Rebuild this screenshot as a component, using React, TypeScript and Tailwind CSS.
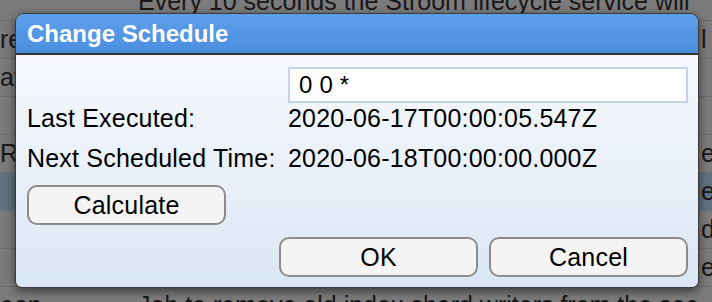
import React from "react";

type Row = { l?: string; d?: string; r?: string; hl?: boolean };

const rows: Row[] = [
  { d: "Every 10 seconds the Stroom lifecycle service will" },
  { l: "re", r: "l" },
  { l: "at" },
  {},
  { l: "Re", r: "e" },
  { r: "e", hl: true },
  { r: "d" },
  { r: "e" },
  { l: "oon", d: "Job to remove old index shard writers from the sec" },
];

const font = { fontFamily: '"Liberation Sans", Arial, sans-serif' };

export default function App() {
  return (
    <div
      className="relative w-[712px] h-[302px] overflow-hidden bg-[#7a7a7a]"
      style={font}
    >
      {/* dimmed page behind the dialog */}
      <div className="flex flex-col mt-[-17px]">
        {rows.map((row, i) => {
          const wide = i === 0 || i === 8;
          return (
            <div
              key={i}
              className={
                row.hl
                  ? "flex h-[38px] items-center border-b border-[#6c7680] bg-[#61707f] text-[25px] text-[#181818] whitespace-nowrap"
                  : "flex h-[38px] items-center border-b border-[#6d6d6d] bg-[#7b7b7b] text-[25px] text-[#181818] whitespace-nowrap"
              }
            >
              <div className={wide ? "w-[138px] shrink-0 overflow-hidden" : "w-[15px] shrink-0 overflow-hidden"}>
                {row.l ?? ""}
              </div>
              {wide ? null : <div className="w-[123px] shrink-0" />}
              <div className="w-[561px] shrink-0 overflow-hidden">{row.d ?? ""}</div>
              <div className="w-[40px] shrink-0 overflow-hidden pl-[2px]">{row.r ?? ""}</div>
            </div>
          );
        })}
      </div>

      {/* dialog */}
      <div className="absolute left-[15px] top-[13px] w-[684px] h-[275px] flex flex-col overflow-hidden rounded-t-[9px] rounded-b-[7px] border border-[#3a3a3a] shadow-[0_3px_10px_rgba(0,0,0,0.55)]">
        <div className="h-[41px] shrink-0 border-b-2 border-[#333333] bg-gradient-to-b from-[#5d9fe9] to-[#4a8edf] pl-[11px]">
          <span className="text-[24px] font-bold leading-[39px] text-white">
            Change Schedule
          </span>
        </div>
        <div className="flex flex-1 flex-col bg-gradient-to-b from-[#f7f9fd] to-[#dbe7f4] pl-[11px] pr-[10px] pt-[12px] text-[25px] tracking-[0.2px] text-black">
          <div className="grid grid-cols-[261px_1fr]">
            <div />
            <div className="h-[36px] border-2 border-[#c8d2e6] bg-white px-[9px] text-[24px] leading-[32px]">
              0 0 *
            </div>
          </div>
          <div className="mt-[1px] grid h-[28px] grid-cols-[261px_1fr] leading-[28px]">
            <div>Last Executed:</div>
            <div>2020-06-17T00:00:05.547Z</div>
          </div>
          <div className="mt-[12px] grid h-[28px] grid-cols-[261px_1fr] leading-[28px]">
            <div>Next Scheduled Time:</div>
            <div>2020-06-18T00:00:00.000Z</div>
          </div>
          <div className="mt-[13px] flex">
            <button className="h-[40px] w-[199px] rounded-[10px] border-2 border-[#8c8c8c] bg-[#f4f4f4] text-[25px] leading-[36px] text-black">
              Calculate
            </button>
          </div>
          <div className="mt-[12px] flex justify-end gap-[11px]">
            <button className="h-[40px] w-[199px] rounded-[10px] border-2 border-[#8c8c8c] bg-[#f4f4f4] text-[25px] leading-[36px] text-black">
              OK
            </button>
            <button className="h-[40px] w-[199px] rounded-[10px] border-2 border-[#8c8c8c] bg-[#f4f4f4] text-[25px] leading-[36px] text-black">
              Cancel
            </button>
          </div>
        </div>
      </div>
    </div>
  );
}
